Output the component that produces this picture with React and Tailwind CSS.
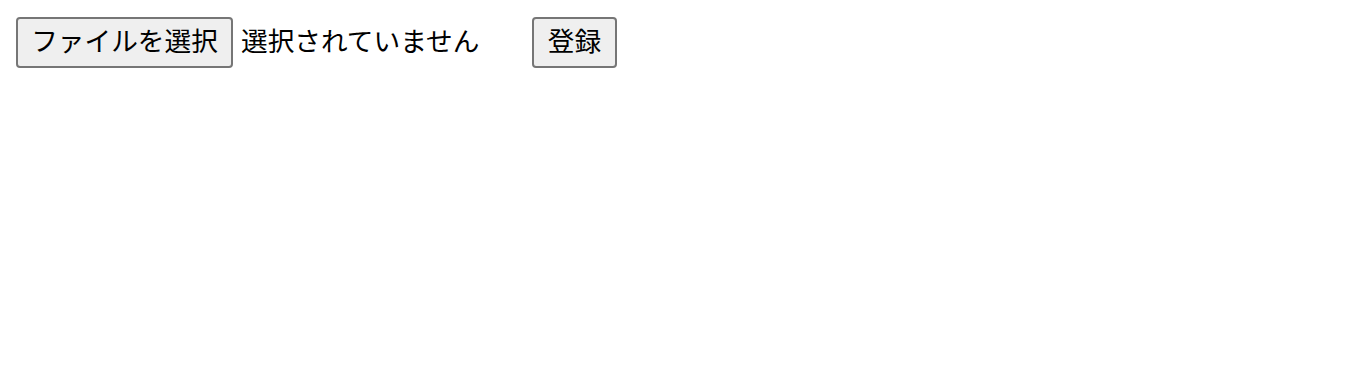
export default function App() {
  const font = { fontFamily: '"Noto Sans CJK JP", "Noto Sans", sans-serif' };
  return (
    <div className="w-[1356px] h-[388px] bg-white" style={font}>
      <div className="flex items-center pl-[16px] pt-[17px]">
        <button className="w-[217px] h-[51px] pb-[5px] rounded-[4px] border-2 border-[#767676] bg-[#efefef] text-[26.67px] leading-none text-black flex items-center justify-center">
          ファイルを選択
        </button>
        <span className="ml-[8px] w-[291px] pb-[5px] text-[26.67px] leading-none text-black">選択されていません</span>
        <button className="w-[85px] h-[51px] pb-[5px] rounded-[4px] border-2 border-[#767676] bg-[#efefef] text-[26.67px] leading-none text-black flex items-center justify-center">
          登録
        </button>
      </div>
    </div>
  );
}
